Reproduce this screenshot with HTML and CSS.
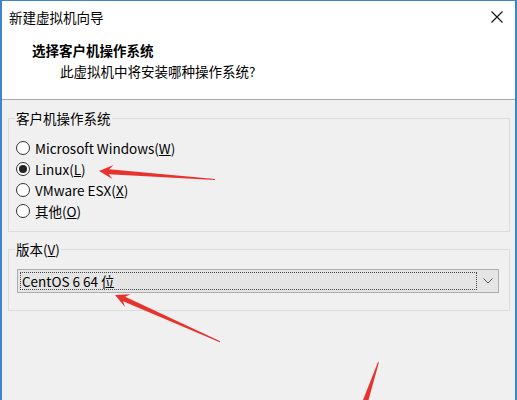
FILE: index.html
```html
<!DOCTYPE html>
<html lang="zh-CN">
<head>
    <meta charset="UTF-8">
    <meta name="viewport" content="width=device-width, initial-scale=1.0">
    <title>新建虚拟机向导</title>
    <link rel="stylesheet" href="styles.css">
</head>
<body>
    <div class="window">
        <div class="top">
            <div class="titlebar">
                <span class="caption">新建虚拟机向导</span>
                <span class="close">
                    <svg width="12" height="12" viewBox="0 0 12 12">
                        <path d="M0.5 0.5 L11.5 11.5 M11.5 0.5 L0.5 11.5" stroke="#111" stroke-width="1.1" fill="none"/>
                    </svg>
                </span>
            </div>
            <div class="header">
                <h1>选择客户机操作系统</h1>
                <p>此虚拟机中将安装哪种操作系统?</p>
            </div>
        </div>
        <div class="content">
            <fieldset class="group group-os">
                <legend>客户机操作系统</legend>
                <div class="radio"><span class="dot"></span>Microsoft Windows(<u>W</u>)</div>
                <div class="radio checked"><span class="dot"></span>Linux(<u>L</u>)</div>
                <div class="radio"><span class="dot"></span>VMware ESX(<u>X</u>)</div>
                <div class="radio"><span class="dot"></span>其他(<u>O</u>)</div>
            </fieldset>
            <fieldset class="group group-version">
                <legend>版本(<u>V</u>)</legend>
                <div class="combo">
                    <span class="combo-value">CentOS 6 64 位</span>
                    <span class="combo-arrow">
                        <svg width="10" height="6" viewBox="0 0 10 6">
                            <path d="M0.5 0.5 L5 5 L9.5 0.5" stroke="#555" stroke-width="1" fill="none"/>
                        </svg>
                    </span>
                </div>
            </fieldset>
        </div>

        <!-- red annotation arrows -->
        <svg class="marks" width="517" height="400" viewBox="0 0 517 400">
            <polygon fill="#e8322e" points="99,171 113.5,165 109.2,169.2 215,178.9 215,180.1 108.8,174.2 112.5,179"/>
            <polygon fill="#e8322e" points="115,295 130.6,294.3 125.2,296.8 220.2,341.2 219.8,342.3 123.1,301.3 125,307.1"/>
            <polygon fill="#e8322e" points="378,362 378.9,362.6 368.5,400 363,400"/>
        </svg>
    </div>
</body>
</html>
```

FILE: styles.css
```css
body {
    margin: 0;
    font-family: "Noto Sans CJK SC", "Noto Sans", sans-serif;
    font-size: 13.5px;
    color: #000;
    overflow: hidden;
}
.window {
    position: relative;
    width: 517px;
    height: 400px;
    box-sizing: border-box;
    border-top: 1px solid #3c87cc;
    border-left: 2px solid #3c87cc;
    border-right: 2px solid #3c87cc;
    background: #f0f0f0;
}
.top {
    background: #fff;
    height: 98px;
    border-bottom: 1px solid #a8a8a8;
}
.titlebar {
    height: 32px;
    display: flex;
    align-items: center;
    justify-content: space-between;
    padding-left: 7px;
}
.caption {
    line-height: 20px;
}
.close {
    width: 36px;
    height: 32px;
    display: flex;
    align-items: center;
    justify-content: center;
}
.header h1 {
    margin: 0;
    padding: 7px 0 0 30px;
    font-size: 13.5px;
    font-weight: bold;
    line-height: 20px;
}
.header p {
    margin: 1px 0 0 58px;
    line-height: 20px;
}
.group {
    margin: 0 5px 0 6px;
    border: 1px solid #dcdcdc;
    padding: 0 10px 10px 6px;
}
.group legend {
    padding: 0 1px;
    line-height: 18px;
}
.group-os {
    margin-top: 9px;
    padding-top: 10px;
}
.group-version {
    margin-top: 8px;
    padding-top: 11px;
    padding-bottom: 17px;
}
.radio {
    display: flex;
    align-items: center;
    height: 21px;
    padding-left: 1px;
}
.dot {
    width: 12px;
    height: 12px;
    border: 1px solid #333;
    border-radius: 50%;
    background: #fff;
    margin-right: 5px;
    display: flex;
    align-items: center;
    justify-content: center;
}
.checked .dot::after {
    content: "";
    width: 8px;
    height: 8px;
    border-radius: 50%;
    background: #222;
}
.combo {
    margin-left: 2px;
    border: 1px solid #adadad;
    background: #e5e5e5;
    display: flex;
    align-items: stretch;
    padding: 2px 0 2px 2px;
    height: 18px;
}
.combo-value {
    flex: 1;
    border: 1px dotted #444;
    line-height: 16px;
    padding-left: 1px;
}
.combo-arrow {
    width: 21px;
    display: flex;
    align-items: center;
    justify-content: center;
}
.marks {
    position: absolute;
    left: -2px;
    top: -1px;
    pointer-events: none;
}
```
